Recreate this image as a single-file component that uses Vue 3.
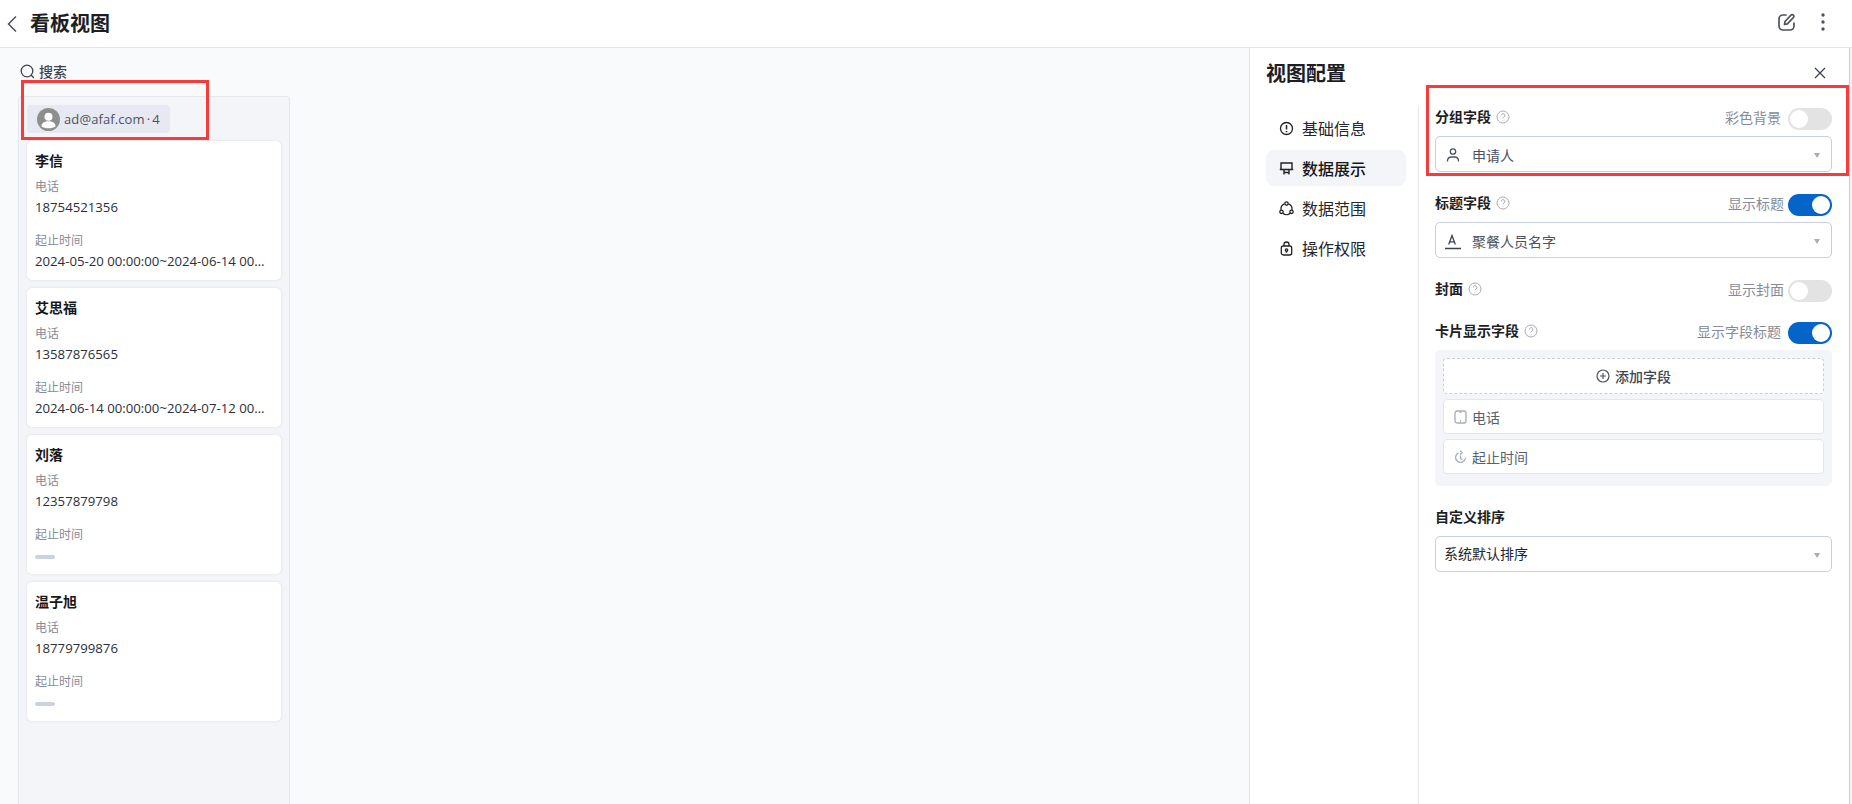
<script setup>
const cards = [
  { name: '李信', phone: '18754521356', time: '2024-05-20 00:00:00~2024-06-14 00:00:00' },
  { name: '艾思福', phone: '13587876565', time: '2024-06-14 00:00:00~2024-07-12 00:00:00' },
  { name: '刘落', phone: '12357879798', time: '' },
  { name: '温子旭', phone: '18779799876', time: '' },
]
</script>

<template>
  <div class="page">
    <header class="topbar">
      <svg class="back" width="12" height="18" viewBox="0 0 12 18" fill="none"><path d="M10 1.500 2.500 9l7.500 7.500" stroke="#4a4f5c" stroke-width="1.500"/></svg>
      <h1 class="page-title">看板视图</h1>
      <div class="top-actions">
        <svg width="20" height="20" viewBox="0 0 20 20" fill="none" stroke="#4c5260" stroke-width="1.700" stroke-linecap="round" stroke-linejoin="round">
          <path d="M9 3H6a4 4 0 0 0-4 4v7a4 4 0 0 0 4 4h7a4 4 0 0 0 4-4v-3"/>
          <path d="M7.500 12.500 8 9.500l6-6.300a1.600 1.600 0 0 1 2.400 0 1.600 1.600 0 0 1 0 2.300l-6 6.400z"/>
        </svg>
        <svg width="6" height="18" viewBox="0 0 6 18" fill="#4c5260"><circle cx="3" cy="2" r="1.700"/><circle cx="3" cy="9" r="1.700"/><circle cx="3" cy="16" r="1.700"/></svg>
      </div>
    </header>

    <div class="content">
      <main class="board">
        <div class="search">
          <svg width="15" height="15" viewBox="0 0 15 15" fill="none" stroke="#3e4452" stroke-width="1.300" stroke-linecap="round"><circle cx="7" cy="7" r="5.800"/><path d="m11.200 11.200 2.300 2.300"/></svg>
          <span>搜索</span>
        </div>
        <section class="column">
          <div class="chip">
            <svg class="avatar" width="23" height="23" viewBox="0 0 23 23"><circle cx="11.500" cy="11.500" r="11.500" fill="#8e8e8e"/><circle cx="11.500" cy="8.800" r="4" fill="#fff"/><path d="M4.500 18.500c0-3.600 3-5.200 7-5.200s7 1.600 7 5.200c-1.800 1.200-4.200 1.800-7 1.800s-5.200-.6-7-1.800z" fill="#fff"/></svg>
            <span>ad@afaf.com</span><span class="dot">·</span><span>4</span>
          </div>
          <article v-for="c in cards" :key="c.name" class="card">
            <div class="card-name">{{ c.name }}</div>
            <div class="card-label">电话</div>
            <div class="card-value">{{ c.phone }}</div>
            <div class="card-label second">起止时间</div>
            <div v-if="c.time" class="card-value clip">{{ c.time }}</div>
            <div v-else class="card-empty"><i></i></div>
          </article>
        </section>
      </main>

      <aside class="panel">
        <div class="panel-head">
          <h2>视图配置</h2>
          <svg class="close" width="14" height="14" viewBox="0 0 14 14" fill="none" stroke="#3c4250" stroke-width="1.300"><path d="m2 2 10 10M12 2 2 12"/></svg>
        </div>
        <div class="panel-body">
          <nav class="nav">
            <div class="nav-item">
              <svg width="15" height="15" viewBox="0 0 15 15" fill="none" stroke="#222" stroke-width="1.300"><circle cx="7.500" cy="7.500" r="6"/><path d="M7.500 4v4.500M7.500 10v1.300" stroke-width="1.500"/></svg>
              <span>基础信息</span>
            </div>
            <div class="nav-item active">
              <svg width="15" height="15" viewBox="0 0 15 15" fill="none" stroke="#222" stroke-width="1.400"><path d="M2 2h11v6.500H2zM.8 8.500h13.400M5 8.500v5M10 8.500v5M5 11.500h5"/></svg>
              <span>数据展示</span>
            </div>
            <div class="nav-item">
              <svg width="15" height="15" viewBox="0 0 15 15" fill="none" stroke="#222" stroke-width="1.300"><path d="M5.300 2.800a5.500 5.500 0 0 0-3.200 6M3.800 12.200a5.500 5.500 0 0 0 7.400 0M12.900 8.800a5.500 5.500 0 0 0-3.200-6"/><circle cx="7.500" cy="2.500" r="1.700"/><circle cx="2.500" cy="10.800" r="1.700"/><circle cx="12.500" cy="10.800" r="1.700"/></svg>
              <span>数据范围</span>
            </div>
            <div class="nav-item">
              <svg width="15" height="15" viewBox="0 0 15 15" fill="none" stroke="#222" stroke-width="1.300"><rect x="2.300" y="5" width="10.400" height="9" rx="2"/><path d="M5 5V3.500a2.500 2.500 0 0 1 5 0V5"/><circle cx="7.500" cy="9" r="1.200"/><path d="M7.500 10v1.800"/></svg>
              <span>操作权限</span>
            </div>
          </nav>

          <div class="config">
            <div class="row first">
              <div class="row-title">分组字段<svg class="help" viewBox="0 0 14 14"><circle cx="7" cy="7" r="6"/><path d="M5.300 5.500a1.800 1.800 0 1 1 2.700 1.500c-.7.400-1 .8-1 1.500M7 10v.6"/></svg></div>
              <div class="switch-wrap"><span>彩色背景</span><div class="switch"><i></i></div></div>
            </div>
            <div class="select">
              <svg class="sel-icon person" width="16" height="16" viewBox="0 0 16 16" fill="none" stroke="#4c5260" stroke-width="1.300"><circle cx="8" cy="4.500" r="2.700"/><path d="M2.500 14.500v-1a4 4 0 0 1 4-3.500h3a4 4 0 0 1 4 3.500v1"/></svg>
              <span class="sel-text">申请人</span><b class="caret"></b>
            </div>

            <div class="row">
              <div class="row-title">标题字段<svg class="help" viewBox="0 0 14 14"><circle cx="7" cy="7" r="6"/><path d="M5.300 5.500a1.800 1.800 0 1 1 2.700 1.500c-.7.400-1 .8-1 1.500M7 10v.6"/></svg></div>
              <div class="switch-wrap tight"><span>显示标题</span><div class="switch on"><i></i></div></div>
            </div>
            <div class="select">
              <svg class="sel-icon letter" width="16" height="16" viewBox="0 0 16 16" fill="none" stroke="#3c4250" stroke-width="1.300"><path d="m3.700 10.500 3.300-9 3.300 9M4.800 7.800h4.400M0 14.500h16"/></svg>
              <span class="sel-text">聚餐人员名字</span><b class="caret"></b>
            </div>

            <div class="row">
              <div class="row-title">封面<svg class="help" viewBox="0 0 14 14"><circle cx="7" cy="7" r="6"/><path d="M5.300 5.500a1.800 1.800 0 1 1 2.700 1.500c-.7.400-1 .8-1 1.500M7 10v.6"/></svg></div>
              <div class="switch-wrap tight"><span>显示封面</span><div class="switch"><i></i></div></div>
            </div>

            <div class="row fourth">
              <div class="row-title">卡片显示字段<svg class="help" viewBox="0 0 14 14"><circle cx="7" cy="7" r="6"/><path d="M5.300 5.500a1.800 1.800 0 1 1 2.700 1.500c-.7.400-1 .8-1 1.500M7 10v.6"/></svg></div>
              <div class="switch-wrap"><span>显示字段标题</span><div class="switch on"><i></i></div></div>
            </div>
            <div class="fields">
              <div class="add">
                <svg width="14" height="14" viewBox="0 0 14 14" fill="none" stroke="#4c5260" stroke-width="1.200"><circle cx="7" cy="7" r="6"/><path d="M7 4v6M4 7h6"/></svg>
                <span>添加字段</span>
              </div>
              <div class="field">
                <svg width="13" height="14" viewBox="0 0 13 14" fill="none" stroke="#a8adb8" stroke-width="1.300"><rect x="1" y="1" width="11" height="12" rx="2"/><path d="M5.500 2.400h2M6 11h1"/></svg>
                <span>电话</span>
              </div>
              <div class="field">
                <svg width="13" height="14" viewBox="0 0 13 14" fill="none" stroke="#a8adb8" stroke-width="1.300"><path d="M4.500 2.800A5 5 0 1 0 11.500 8M6.500 5.500v3l2 1M6 .8l2.200 1.800L6 4.500"/></svg>
                <span>起止时间</span>
              </div>
            </div>

            <div class="row-title sort-title">自定义排序</div>
            <div class="select sort-select">
              <span class="sel-text dark">系统默认排序</span><b class="caret"></b>
            </div>
          </div>
        </div>
      </aside>
    </div>

    <div class="mark mark-a"></div>
    <div class="mark mark-b"></div>
  </div>
</template>

<style>
html, body { margin: 0; padding: 0; background: #fff; }
</style>

<style scoped>
.page {
  position: relative;
  width: 1852px;
  height: 804px;
  overflow: hidden;
  display: flex;
  flex-direction: column;
  box-sizing: border-box;
  background: #fff;
  color: #23262e;
  font-family: "Open Sans", "Noto Sans CJK SC", sans-serif;
}
h1, h2 { margin: 0; }
.topbar {
  flex: none;
  height: 47px;
  display: flex;
  align-items: center;
  padding-left: 6px;
  padding-right: 26px;
  border-bottom: 1px solid #e4e6ee;
}
.back { margin-right: 12px; }
.page-title { font-size: 20px; font-weight: 700; color: #1c1e24; line-height: 28px; }
.top-actions { margin-left: auto; margin-top: -3px; display: flex; align-items: center; gap: 23px; }
.content { flex: 1; min-height: 0; display: flex; }
.board {
  flex: 1;
  min-width: 0;
  background: #f9fafc;
  padding: 13px 0 0 18px;
  display: flex;
  flex-direction: column;
}
.search {
  display: flex;
  align-items: center;
  gap: 4px;
  height: 20px;
  margin-left: 2px;
  font-size: 14px;
  font-weight: 500;
  color: #3e4452;
}
.column {
  flex: 1;
  width: 272px;
  box-sizing: border-box;
  margin-top: 15px;
  padding: 8px 7px 0;
  background: #f4f5f9;
  border: 1px solid #e5e7ef;
  border-bottom: 0;
  border-radius: 4px 4px 0 0;
}
.chip {
  width: 143px;
  height: 28px;
  box-sizing: border-box;
  margin-left: 1px;
  margin-bottom: 8px;
  padding-left: 10px;
  display: flex;
  align-items: center;
  background: #e6e9f1;
  border-radius: 4px;
  font-size: 13px;
  letter-spacing: .1px;
  color: #4c5260;
}
.avatar { margin-right: 4px; flex: none; }
.dot { margin: 0 2px; }
.card {
  width: 254px;
  height: 139px;
  box-sizing: border-box;
  margin: 0 0 8px 1px;
  padding: 10px 8px 0;
  background: #fff;
  border-radius: 5px;
  box-shadow: 0 0 3px rgba(60, 70, 100, .13);
}
.card-name { font-size: 14px; font-weight: 700; line-height: 20px; color: #15171c; }
.card-label { margin-top: 7px; font-size: 12px; line-height: 18px; color: #868b97; }
.card-label.second { margin-top: 15px; }
.card-value { margin-top: 1px; font-size: 13.200px; line-height: 20px; color: #2b2f38; }
.clip { white-space: nowrap; overflow: hidden; text-overflow: ellipsis; margin-right: 6px; }
.card-empty { height: 20px; margin-top: 1px; padding-top: 10px; box-sizing: border-box; }
.card-empty i { display: block; width: 20px; height: 4px; border-radius: 2px; background: #ccd3e0; }
.panel {
  flex: none;
  width: 603px;
  box-sizing: border-box;
  display: flex;
  flex-direction: column;
  background: #fff;
  border-left: 1px solid #e4e6ee;
  border-right: 2px solid #f4f4f4;
  position: relative;
}
.panel::after {
  content: "";
  position: absolute;
  top: 0;
  bottom: 0;
  right: 0;
  width: 1px;
  background: #c9cdd8;
}
.panel-head {
  flex: none;
  height: 48px;
  padding: 4px 23px 0 16px;
  box-sizing: border-box;
  display: flex;
  align-items: center;
  justify-content: space-between;
}
.close { margin-top: -3px; }
.panel-head h2 { font-size: 20px; font-weight: 700; color: #1c1e24; line-height: 28px; }
.panel-body { flex: 1; min-height: 0; display: flex; padding-left: 16px; padding-top: 10px; }
.nav {
  width: 153px;
  flex: none;
  box-sizing: border-box;
  padding: 4px 12px 0 0;
  border-right: 1px solid #e4e6ee;
  display: flex;
  flex-direction: column;
  gap: 4px;
}
.nav-item {
  height: 36px;
  display: flex;
  align-items: center;
  gap: 8px;
  padding-left: 13px;
  border-radius: 8px;
  font-size: 16px;
  color: #23262e;
}
.nav-item.active { background: #f4f5f9; font-weight: 500; color: #15171c; }
.config { width: 397px; margin-left: 16px; padding-top: 0; }
.row { height: 22px; margin-top: 22px; display: flex; align-items: center; justify-content: space-between; }
.row.first { margin-top: 2px; }
.row.fourth { margin-top: 20px; }
.row-title { display: flex; align-items: center; font-size: 14px; font-weight: 700; color: #1c1e24; line-height: 20px; }
.row > .row-title { margin-top: -4px; }
.help { width: 14px; height: 14px; margin-left: 5px; fill: none; stroke: #a8acb7; stroke-width: 1; }
.switch-wrap { display: flex; align-items: center; gap: 7px; font-size: 14px; color: #868b97; }
.switch-wrap > span { margin-top: -4px; }
.switch-wrap.tight { gap: 4px; }
.switch {
  width: 44px;
  height: 22px;
  box-sizing: border-box;
  padding: 2px;
  border-radius: 11px;
  background: #e3e3e3;
  display: flex;
}
.switch i { width: 18px; height: 18px; border-radius: 50%; background: #fff; }
.switch.on { background: #0564c8; justify-content: flex-end; }
.select {
  height: 36px;
  margin-top: 6px;
  box-sizing: border-box;
  border: 1px solid #c9cfdc;
  border-radius: 5px;
  display: flex;
  align-items: center;
  padding: 0 11px 0 9px;
  font-size: 14px;
  color: #4c5260;
}
.sort-select { margin-top: 9px; }
.sel-icon { margin-right: 11px; flex: none; }
.sel-icon.person { margin-top: 2px; }
.sel-icon.letter { margin-top: 4px; }
.sel-text { margin-top: 2px; }
.sel-text.dark { color: #23262e; margin-left: -1px; margin-top: -3px; }
.caret {
  margin-left: auto;
  width: 0;
  height: 0;
  border-left: 3.500px solid transparent;
  border-right: 3.500px solid transparent;
  border-top: 5px solid #a8adb8;
  margin-top: 2px;
}
.fields {
  margin-top: 6px;
  height: 136px;
  box-sizing: border-box;
  padding: 8px;
  background: #f4f5f9;
  border-radius: 5px;
  display: flex;
  flex-direction: column;
  gap: 5px;
}
.add {
  height: 36px;
  flex: none;
  box-sizing: border-box;
  border: 1px dashed #c9cfdc;
  border-radius: 4px;
  background: #fff;
  display: flex;
  align-items: center;
  justify-content: center;
  gap: 5px;
  font-size: 14px;
  font-weight: 500;
  color: #3e4452;
}
.field {
  height: 35px;
  flex: none;
  box-sizing: border-box;
  border: 1px solid #e4e6ee;
  border-radius: 4px;
  background: #fff;
  display: flex;
  align-items: center;
  gap: 5px;
  padding-left: 10px;
  font-size: 14px;
  color: #5a5f6c;
}
.sort-title { margin-top: 21px; }
.mark {
  position: absolute;
  box-sizing: border-box;
  border: 3px solid #f93a3a;
  pointer-events: none;
}
.mark-a { left: 21px; top: 80px; width: 188px; height: 60px; }
.mark-b { left: 1426px; top: 85px; width: 423px; height: 91px; }
</style>
